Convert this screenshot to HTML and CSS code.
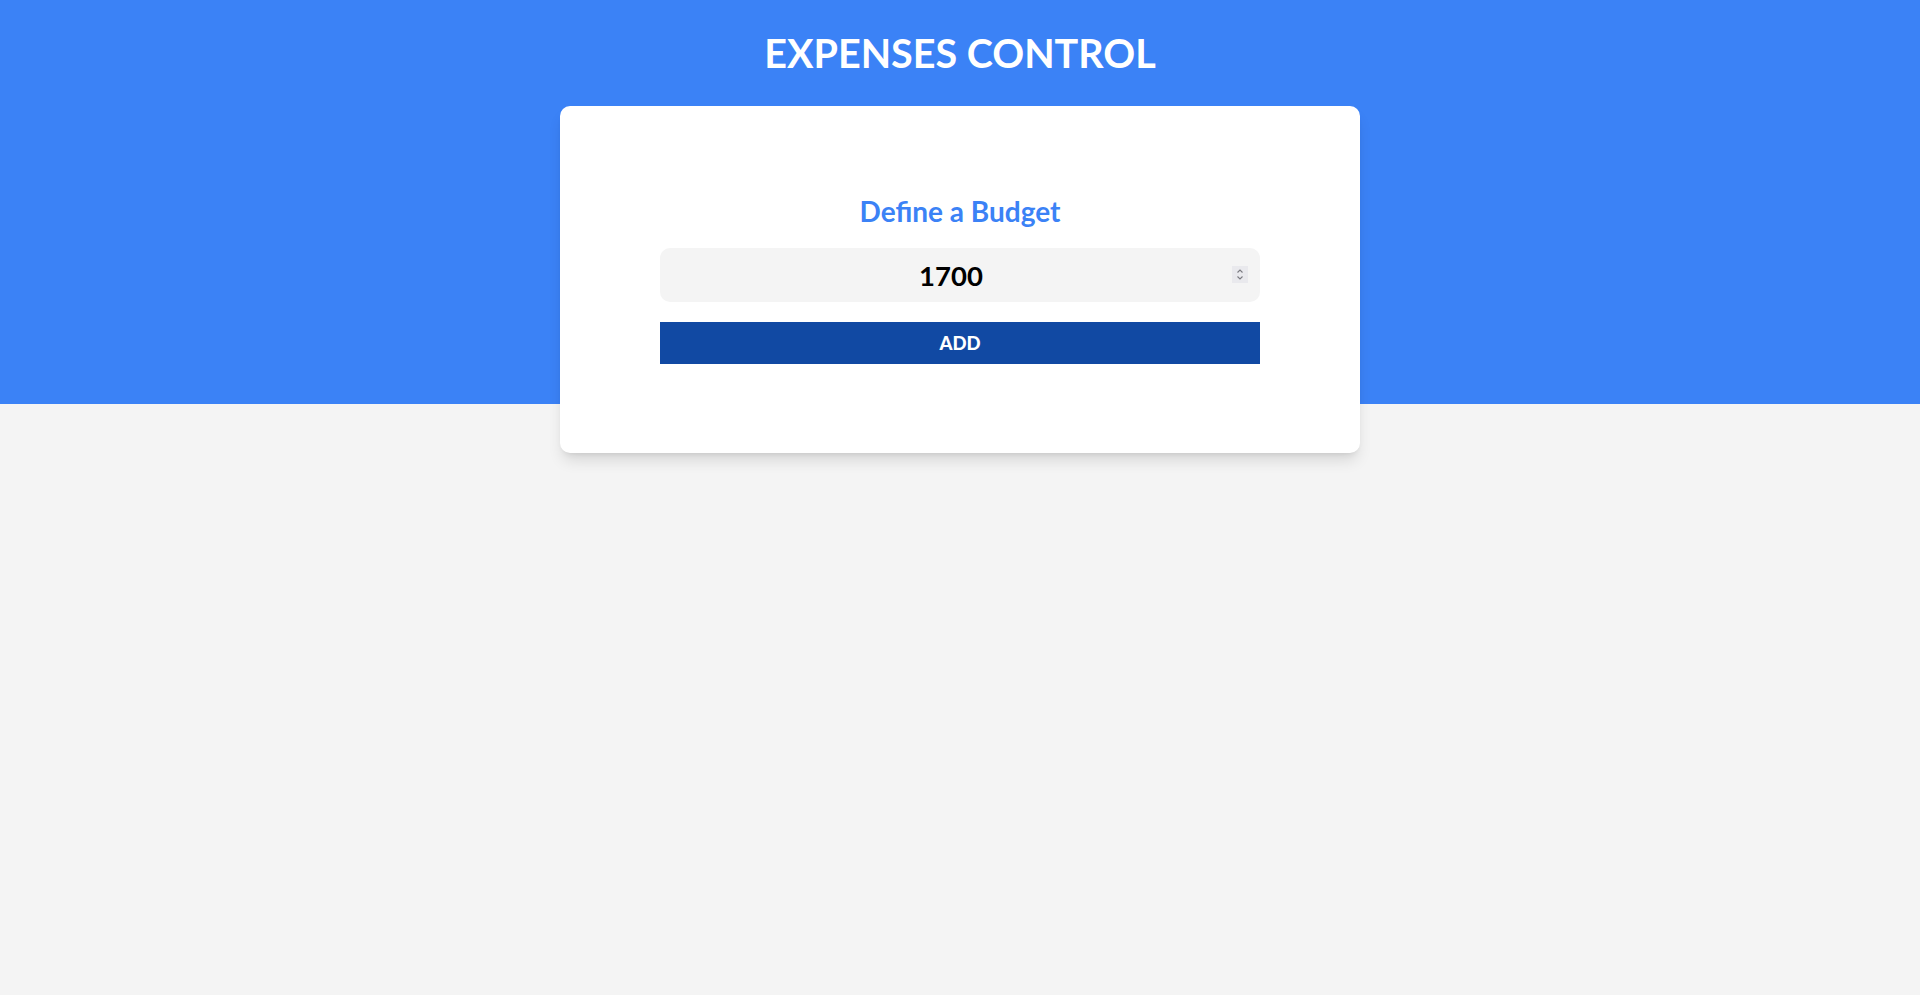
FILE: index.html
```html
<!DOCTYPE html>
<html lang="en">
<head>
<meta charset="utf-8">
<title>Expenses Control</title>
<link rel="stylesheet" href="styles.css">
</head>
<body>
<header class="header">
  <h1 class="header-title">EXPENSES CONTROL</h1>
  <div class="card">
    <form class="budget-form">
      <label class="budget-label" for="budget">Define a Budget</label>
      <div class="input-wrap">
        <input class="budget-input" id="budget" type="number" value="1700">
        <span class="spinner" aria-hidden="true">
          <svg width="16" height="17" viewBox="0 0 16 17">
            <path d="M5.5 6.5 L8 4 L10.5 6.5" fill="none" stroke="#7a7a80" stroke-width="1.1"/>
            <path d="M5.5 10.5 L8 13 L10.5 10.5" fill="none" stroke="#7a7a80" stroke-width="1.1"/>
          </svg>
        </span>
      </div>
      <button class="budget-button" type="button">ADD</button>
    </form>
  </div>
</header>
</body>
</html>
```

FILE: styles.css
```css
* { box-sizing: border-box; }

html, body {
  margin: 0;
  padding: 0;
}

body {
  background: #f4f4f4;
  font-family: "Lato", "Liberation Sans", sans-serif;
  min-height: 995px;
}

.header {
  background: #3b82f6;
  height: 404px;
  padding-top: 29px;
}

.header-title {
  margin: 0;
  color: #ffffff;
  font-size: 39.5px;
  line-height: 48px;
  font-weight: 700;
  text-align: center;
}

.card {
  width: 800px;
  margin: 29px auto 0;
  background: #ffffff;
  border-radius: 10px;
  box-shadow: 0 10px 15px -3px rgba(0, 0, 0, 0.12), 0 4px 6px -4px rgba(0, 0, 0, 0.12);
  padding: 88px 0 89px;
}

.budget-form {
  width: 600px;
  margin: 0 auto;
  display: flex;
  flex-direction: column;
  gap: 20px;
}

.budget-label {
  color: #3b82f6;
  font-size: 28px;
  font-weight: 700;
  text-align: center;
  line-height: 34px;
}

.input-wrap {
  position: relative;
}

.budget-input {
  display: block;
  width: 100%;
  height: 54px;
  border: none;
  outline: none;
  background: #f4f4f4;
  border-radius: 10px;
  padding: 0 30px 0 12px;
  font-family: inherit;
  font-size: 27.5px;
  font-weight: 700;
  color: #000000;
  text-align: center;
  -moz-appearance: textfield;
}

.budget-input::-webkit-inner-spin-button,
.budget-input::-webkit-outer-spin-button {
  -webkit-appearance: none;
  margin: 0;
}

.spinner {
  position: absolute;
  right: 12px;
  top: 18px;
  width: 16px;
  height: 17px;
  background: #e9e9ed;
  display: flex;
}

.budget-button {
  height: 42px;
  border: none;
  background: #1149a3;
  color: #ffffff;
  font-family: inherit;
  font-size: 18.5px;
  font-weight: 900;
  text-transform: uppercase;
  cursor: pointer;
}
```
